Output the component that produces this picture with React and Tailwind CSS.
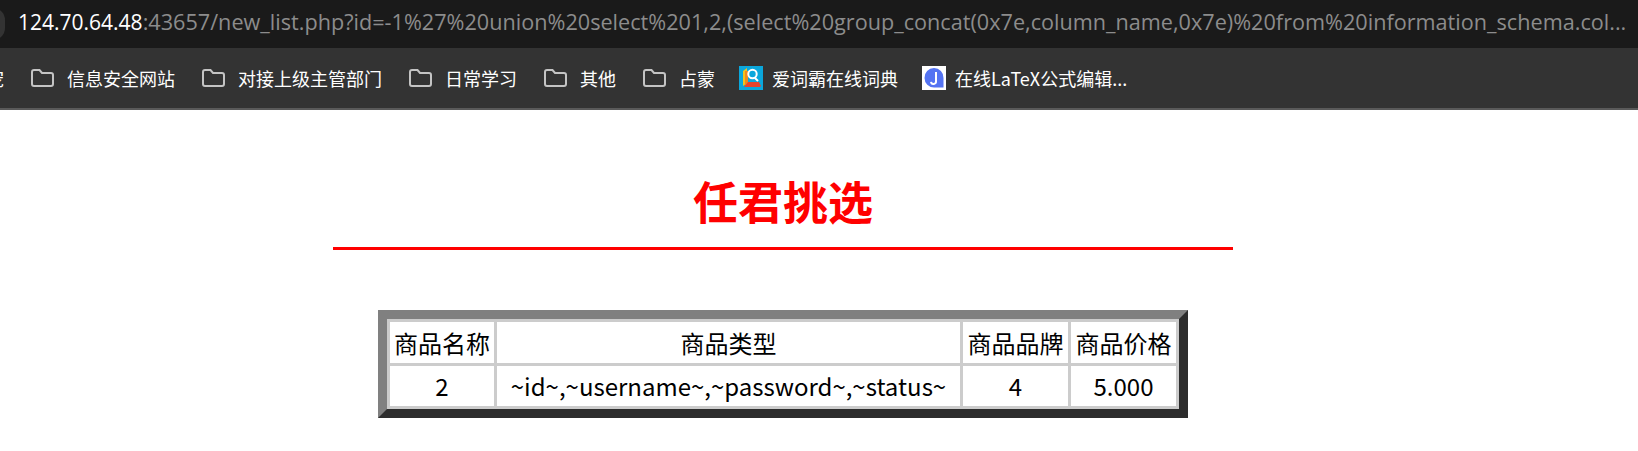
import React from 'react';

const cjk = '"Noto Sans CJK SC", "Noto Sans", sans-serif';

const FolderIcon = () => (
  <svg width="23" height="18" viewBox="0 0 23 18" fill="none" stroke="#c4c4c4" strokeWidth="2" className="shrink-0">
    <path d="M1 3a2 2 0 0 1 2-2h5.5l2.5 3h9a2 2 0 0 1 2 2v9a2 2 0 0 1-2 2H3a2 2 0 0 1-2-2z" />
  </svg>
);

const IcibaIcon = () => (
  <svg width="24" height="24" viewBox="0 0 24 24" className="shrink-0">
    <rect width="24" height="24" fill="#0ba7dc" />
    <path d="M4 5l4-3v15l-4 3z" fill="#f5c21c" />
    <path d="M6 5h3v14H6z" fill="#f08a1c" />
    <circle cx="13.5" cy="8" r="4.2" fill="#0ba7dc" stroke="#fff" strokeWidth="2" />
    <path d="M16 12l3 3" stroke="#fff" strokeWidth="2" />
    <path d="M5 21l4-5h11l2 4-1 1z" fill="#e8432c" />
  </svg>
);

const LatexIcon = () => (
  <svg width="24" height="24" viewBox="0 0 24 24" className="shrink-0">
    <rect width="24" height="24" fill="#fff" />
    <path d="M12 2a9.5 9.5 0 0 0-9.5 10A9.5 9.5 0 0 0 12 21.5h9.5V12A9.5 9.5 0 0 0 12 2z" fill="#5473f2" />
    <path d="M14 6v9a2.5 2.5 0 0 1-5 .8" fill="none" stroke="#fff" strokeWidth="2" />
  </svg>
);

const bookmarks = ['信息安全网站', '对接上级主管部门', '日常学习', '其他', '占蒙'];

const BookmarkBar = () => (
  <div className="flex h-[62px] items-center overflow-hidden border-b-2 border-[#5a5a5a] bg-[#333333] text-[18px] text-white">
    <span className="ml-[-14px] mr-[27px]">宠</span>
    {bookmarks.map((b) => (
      <div key={b} className="mr-[27px] flex items-center gap-[13px]">
        <FolderIcon />
        <span>{b}</span>
      </div>
    ))}
    <div className="ml-[-3px] mr-[24px] flex items-center gap-[9px]">
      <IcibaIcon />
      <span>爱词霸在线词典</span>
    </div>
    <div className="flex items-center gap-[9px]">
      <LatexIcon />
      <span>在线LaTeX公式编辑...</span>
    </div>
  </div>
);

const Th = ({ children, className = '' }) => (
  <th className={`bg-white px-[4px] py-0 text-center text-[24px] font-normal leading-[41px] text-black ${className}`}>{children}</th>
);

const Td = ({ children }) => (
  <td className="bg-white px-[4px] py-0 text-center text-[24px] leading-[40px] text-black">{children}</td>
);

export default function App() {
  return (
    <div className="h-[451px] w-[1638px] overflow-hidden bg-white" style={{ fontFamily: cjk }}>
      <div className="relative flex h-[48px] items-center overflow-hidden bg-[#1a1a1a] pb-[3px] pl-[18px] text-[21.65px] text-[#8c8c8c]" style={{ fontFamily: '"Open Sans", sans-serif' }}>
        <div className="absolute left-[-19px] top-[8px] h-[32px] w-[24px] rounded-full bg-[#333333]" />
        <span className="whitespace-nowrap">
          <span className="text-[21px] text-white">124.70.64.48</span>
          :43657/new_list.php?id=-1%27%20union%20select%201,2,(select%20group_concat(0x7e,column_name,0x7e)%20from%20information_schema.col...
        </span>
      </div>
      <BookmarkBar />
      <div className="flex w-[1566px] flex-col items-center">
        <h1 className="mt-[59px] text-[45px] font-bold leading-[64px] text-[#ff0000]">任君挑选</h1>
        <div className="mt-[14px] h-[3px] w-[900px] bg-[#ff0000]" />
        <table className="mt-[60px] border-separate border-spacing-[3px] border-[9px] border-b-[#2d2d2d] border-l-[#808080] border-r-[#2d2d2d] border-t-[#808080] bg-[#cccccc]">
          <tbody>
            <tr>
              <Th className="w-[104px]">商品名称</Th>
              <Th className="w-[463px]">商品类型</Th>
              <Th className="w-[105px]">商品品牌</Th>
              <Th className="w-[105px]">商品价格</Th>
            </tr>
            <tr>
              <Td>2</Td>
              <Td>~id~,~username~,~password~,~status~</Td>
              <Td>4</Td>
              <Td>5.000</Td>
            </tr>
          </tbody>
        </table>
      </div>
    </div>
  );
}
